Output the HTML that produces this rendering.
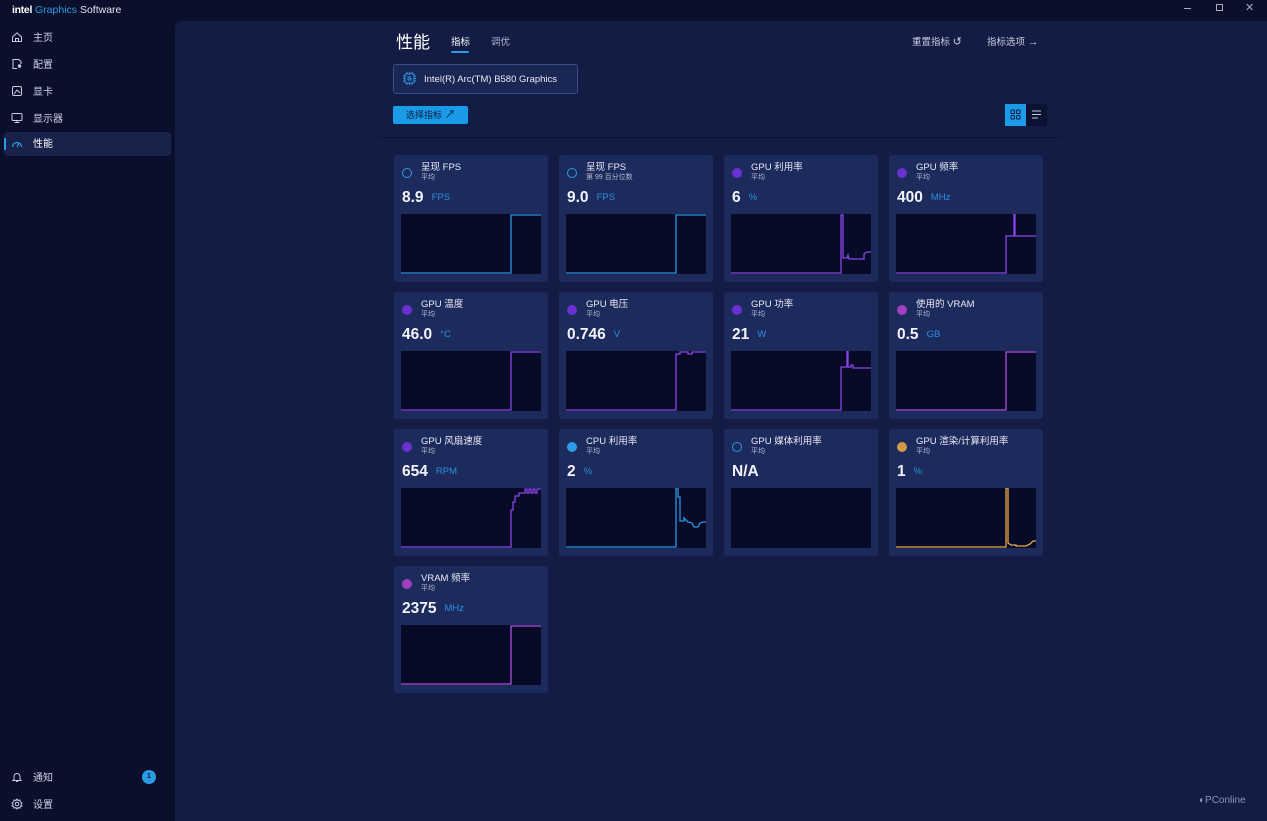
<!DOCTYPE html>
<html><head><meta charset="utf-8"><style>
*{margin:0;padding:0;box-sizing:border-box}
body{width:1267px;height:821px;overflow:hidden;background:#0a0f2b;font-family:"Liberation Sans","Noto Sans CJK SC",sans-serif;color:#e6e9f5;position:relative}
.abs{position:absolute}
.nav{position:absolute;left:0;width:173px;height:26px;font-size:10px;color:#d0d5e8}
.nav span{position:absolute;left:33px;top:9px;line-height:12px}
.nav svg{position:absolute;left:11px;top:7px}
.main{position:absolute;left:175px;top:21px;width:1092px;height:800px;background:#131c45;border-top-left-radius:6px}
.card{position:absolute;width:154px;height:127px;background:#1d2a5c;border-radius:3px}
.card .dot{position:absolute;left:8px;top:13px;width:10px;height:10px;border-radius:50%}
.card .t{position:absolute;left:27px;top:8px;font-size:9.5px;line-height:10px;color:#e8ebf6;white-space:nowrap}
.card .s{position:absolute;left:27px;top:19px;font-size:7px;line-height:7px;color:#b5bbd4}
.card .v{position:absolute;left:8px;top:34px;font-size:15.5px;line-height:18px;font-weight:bold;color:#f2f4fa;white-space:nowrap}
.card .v i{font-style:normal;font-weight:normal;font-size:9.5px;color:#2b8fe0;margin-left:8px;vertical-align:2px}
.card svg{position:absolute;left:7px;top:59px}
</style></head><body>
<div class="abs" style="left:12px;top:4px;font-size:10.5px;white-space:nowrap"><span style="color:#fff;font-weight:bold;letter-spacing:-0.3px">intel</span> <span style="color:#2c9be6">Graphics</span> <span style="color:#e0e4f0">Software</span></div>
<div class="abs" style="left:1184px;top:8px;width:7px;height:1px;background:#aab"></div>
<div class="abs" style="left:1216px;top:4px;width:7px;height:7px;border:1px solid #aab"></div>
<div class="abs" style="left:1245px;top:1px;font-size:11px;color:#aab">✕</div>

<div class="nav" style="top:24px"><svg width="12" height="12" viewBox="0 0 12 12" fill="none" stroke="#c8cde0" stroke-width="1"><path d="M1.5 6 L6 1.8 L10.5 6 V10.5 H1.5 Z M4.5 10.5 V7.5 H7.5 V10.5"/></svg><span>主页</span></div>
<div class="nav" style="top:51px"><svg width="12" height="12" viewBox="0 0 12 12" fill="none" stroke="#c8cde0" stroke-width="1"><path d="M8 1.5 H2 V10.5 H6 M8 1.5 L10 3.5 V6"/><circle cx="8.5" cy="8" r="1.2" fill="#c8cde0"/></svg><span>配置</span></div>
<div class="nav" style="top:78px"><svg width="12" height="12" viewBox="0 0 12 12" fill="none" stroke="#c8cde0" stroke-width="1"><rect x="1.5" y="1.5" width="9" height="9" rx="1.5"/><path d="M3 9 L6 5 L9 8"/></svg><span>显卡</span></div>
<div class="nav" style="top:105px"><svg width="12" height="12" viewBox="0 0 12 12" fill="none" stroke="#c8cde0" stroke-width="1"><rect x="1" y="1.5" width="10" height="7" rx="1"/><path d="M6 8.5 V10.5 M3.5 10.5 H8.5"/></svg><span>显示器</span></div>
<div class="abs" style="left:4px;top:132px;width:167px;height:24px;background:#18224b;border-radius:4px"></div>
<div class="abs" style="left:4px;top:138px;width:2px;height:12px;background:#2c9be6;border-radius:1px"></div>
<div class="nav" style="top:132px"><svg width="12" height="12" viewBox="0 0 12 12" fill="none" stroke="#2c9be6" stroke-width="1.2"><path d="M1.5 8 A4.5 4.5 0 0 1 10.5 8"/><path d="M6 8 L8 4.5"/></svg><span style="color:#fff;top:7px">性能</span></div>
<div class="nav" style="top:764px"><svg width="12" height="12" viewBox="0 0 12 12" fill="none" stroke="#c8cde0" stroke-width="1"><path d="M3 8.5 V5.5 A3 3 0 0 1 9 5.5 V8.5 L10 9.5 H2 Z M5 10.5 H7"/></svg><span>通知</span></div>
<div class="abs" style="left:142px;top:770px;width:14px;height:14px;border-radius:50%;background:#2c9be6;color:#0a1030;font-size:7px;text-align:center;line-height:14px;font-weight:bold">1</div>
<div class="nav" style="top:791px"><svg width="12" height="12" viewBox="0 0 12 12" fill="none" stroke="#c8cde0" stroke-width="1"><circle cx="6" cy="6" r="1.8"/><path d="M6 1 L7 2.5 L9 2 L9.3 4 L11 5 L10 6.5 L11 8 L9.3 8.5 L9 10 L7 9.7 L6 11 L5 9.7 L3 10 L2.7 8.5 L1 8 L2 6.5 L1 5 L2.7 4 L3 2 L5 2.5 Z"/></svg><span>设置</span></div>

<div class="main"></div>
<div class="abs" style="left:396px;top:33px;font-size:17px;line-height:20px;color:#fff">性能</div>
<div class="abs" style="left:451px;top:37px;font-size:9.5px;line-height:12px;color:#fff">指标</div>
<div class="abs" style="left:451px;top:51px;width:18px;height:2px;background:#2c9be6;border-radius:1px"></div>
<div class="abs" style="left:491px;top:37px;font-size:9.5px;line-height:12px;color:#aeb5cf">调优</div>
<div class="abs" style="left:912px;top:36px;font-size:9.5px;line-height:12px;color:#c8cde0">重置指标 <span style="font-size:11px">↺</span></div>
<div class="abs" style="left:987px;top:36px;font-size:9.5px;line-height:12px;color:#c8cde0">指标选项 <span style="font-size:11px">→</span></div>
<div class="abs" style="left:393px;top:64px;width:185px;height:30px;border:1px solid #3b4d86;background:#1a2654;border-radius:3px"></div>
<svg class="abs" style="left:402px;top:71px" width="15" height="15" viewBox="0 0 15 15" fill="none" stroke="#2c9be6" stroke-width="1"><rect x="3" y="3" width="9" height="9" rx="1"/><path d="M5 1V3M7.5 1V3M10 1V3M5 12V14M7.5 12V14M10 12V14M1 5H3M1 7.5H3M1 10H3M12 5H14M12 7.5H14M12 10H14M9 6H6V9H9V7.5H7.5"/></svg>
<div class="abs" style="left:424px;top:74px;font-size:9.5px;line-height:12px;color:#e8ebf6">Intel(R) Arc(TM) B580 Graphics</div>
<div class="abs" style="left:393px;top:106px;width:75px;height:18px;background:#1a9be8;border-radius:2px;font-size:9px;line-height:12px;color:#0b1a40;padding:3px 0 0 13px">选择指标 <span style="font-size:11px;color:#0b1a40">↗</span></div>
<div class="abs" style="left:1005px;top:104px;width:21px;height:22px;background:#1a9be8"></div>
<svg class="abs" style="left:1010px;top:109px" width="11" height="11" viewBox="0 0 11 11" fill="none" stroke="#0b1a40" stroke-width="1"><rect x="1" y="1" width="3.5" height="3.5" rx=".8"/><rect x="6.5" y="1" width="3.5" height="3.5" rx=".8"/><rect x="1" y="6.5" width="3.5" height="3.5" rx=".8"/><rect x="6.5" y="6.5" width="3.5" height="3.5" rx=".8"/></svg>
<div class="abs" style="left:1026px;top:104px;width:21px;height:22px;background:#0b1130"></div>
<svg class="abs" style="left:1031px;top:109px" width="11" height="11" viewBox="0 0 11 11" stroke="#c8cde0" stroke-width="1"><path d="M1 2H10M1 5.5H10M1 9H7"/></svg>
<div class="abs" style="left:378px;top:137px;width:685px;height:1px;background:#0c1434"></div>

<!-- row 1 -->
<div class="card" style="left:394px;top:155px"><div class="dot" style="border:1.5px solid #2c9be6"></div><div class="t">呈现 FPS</div><div class="s">平均</div><div class="v">8.9<i>FPS</i></div>
<svg width="140" height="61"><rect width="140" height="60" fill="#070b27"/><path d="M0 59H110V1H140" fill="none" stroke="#2d94e0" stroke-width="1.3"/></svg></div>
<div class="card" style="left:559px;top:155px"><div class="dot" style="border:1.5px solid #2c9be6"></div><div class="t">呈现 FPS</div><div class="s">第 99 百分位数</div><div class="v">9.0<i>FPS</i></div>
<svg width="140" height="61"><rect width="140" height="60" fill="#070b27"/><path d="M0 59H110V1H140" fill="none" stroke="#2d94e0" stroke-width="1.3"/></svg></div>
<div class="card" style="left:724px;top:155px"><div class="dot" style="background:#6a30d0"></div><div class="t">GPU 利用率</div><div class="s">平均</div><div class="v">6<i>%</i></div>
<svg width="140" height="61"><rect width="140" height="60" fill="#070b27"/><path d="M0 59H110V1H112V44H116L117 41L118 45H133V40L136 38H140" fill="none" stroke="#8a45e8" stroke-width="1.3"/></svg></div>
<div class="card" style="left:889px;top:155px"><div class="dot" style="background:#6a30d0"></div><div class="t">GPU 频率</div><div class="s">平均</div><div class="v">400<i>MHz</i></div>
<svg width="140" height="61"><rect width="140" height="60" fill="#070b27"/><path d="M0 59H110V22H118V0H119V22H140" fill="none" stroke="#8a45e8" stroke-width="1.3"/></svg></div>

<!-- row 2 -->
<div class="card" style="left:394px;top:292px"><div class="dot" style="background:#6a30d0"></div><div class="t">GPU 温度</div><div class="s">平均</div><div class="v">46.0<i>°C</i></div>
<svg width="140" height="61"><rect width="140" height="60" fill="#070b27"/><path d="M0 59H110V1H140" fill="none" stroke="#8a45e8" stroke-width="1.3"/></svg></div>
<div class="card" style="left:559px;top:292px"><div class="dot" style="background:#6a30d0"></div><div class="t">GPU 电压</div><div class="s">平均</div><div class="v">0.746<i>V</i></div>
<svg width="140" height="61"><rect width="140" height="60" fill="#070b27"/><path d="M0 59H110V3H114V1H122V3H126V1H140" fill="none" stroke="#8a45e8" stroke-width="1.3"/></svg></div>
<div class="card" style="left:724px;top:292px"><div class="dot" style="background:#6a30d0"></div><div class="t">GPU 功率</div><div class="s">平均</div><div class="v">21<i>W</i></div>
<svg width="140" height="61"><rect width="140" height="60" fill="#070b27"/><path d="M0 59H110V16H116V0H117V16H120V14H122V17H140" fill="none" stroke="#8a45e8" stroke-width="1.3"/></svg></div>
<div class="card" style="left:889px;top:292px"><div class="dot" style="background:#a040c0"></div><div class="t">使用的 VRAM</div><div class="s">平均</div><div class="v">0.5<i>GB</i></div>
<svg width="140" height="61"><rect width="140" height="60" fill="#070b27"/><path d="M0 59H110V1H140" fill="none" stroke="#b04fe0" stroke-width="1.3"/></svg></div>

<!-- row 3 -->
<div class="card" style="left:394px;top:429px"><div class="dot" style="background:#6a30d0"></div><div class="t">GPU 风扇速度</div><div class="s">平均</div><div class="v">654<i>RPM</i></div>
<svg width="140" height="61"><rect width="140" height="60" fill="#070b27"/><path d="M0 59H110V22H112V14H114V8H118V5H124V1H126V5H128V1H130V5H132V1H134V5H136V1H140" fill="none" stroke="#8a45e8" stroke-width="1.3"/></svg></div>
<div class="card" style="left:559px;top:429px"><div class="dot" style="background:#2c9be6"></div><div class="t">CPU 利用率</div><div class="s">平均</div><div class="v">2<i>%</i></div>
<svg width="140" height="61"><rect width="140" height="60" fill="#070b27"/><path d="M0 59H110V0H112V9H114V33H118V30L122 34L126 35L128 39L132 39L134 35L137 34H140" fill="none" stroke="#2d94e0" stroke-width="1.3"/></svg></div>
<div class="card" style="left:724px;top:429px"><div class="dot" style="border:1.5px solid #2c9be6"></div><div class="t">GPU 媒体利用率</div><div class="s">平均</div><div class="v">N/A</div>
<svg width="140" height="61"><rect width="140" height="60" fill="#070b27"/></svg></div>
<div class="card" style="left:889px;top:429px"><div class="dot" style="background:#d29a45"></div><div class="t">GPU 渲染/计算利用率</div><div class="s">平均</div><div class="v">1<i>%</i></div>
<svg width="140" height="61"><rect width="140" height="60" fill="#070b27"/><path d="M0 59H110V0H112V55L115 57H120V58H130L134 56L137 53H140" fill="none" stroke="#e8a84a" stroke-width="1.3"/></svg></div>

<!-- row 4 -->
<div class="card" style="left:394px;top:566px"><div class="dot" style="background:#a040c0"></div><div class="t">VRAM 频率</div><div class="s">平均</div><div class="v">2375<i>MHz</i></div>
<svg width="140" height="61"><rect width="140" height="60" fill="#070b27"/><path d="M0 59H110V1H140" fill="none" stroke="#b04fe0" stroke-width="1.3"/></svg></div>

<div class="abs" style="left:1199px;top:795px;font-size:10px;color:#8d95b8">◐PConline</div>
</body></html>
